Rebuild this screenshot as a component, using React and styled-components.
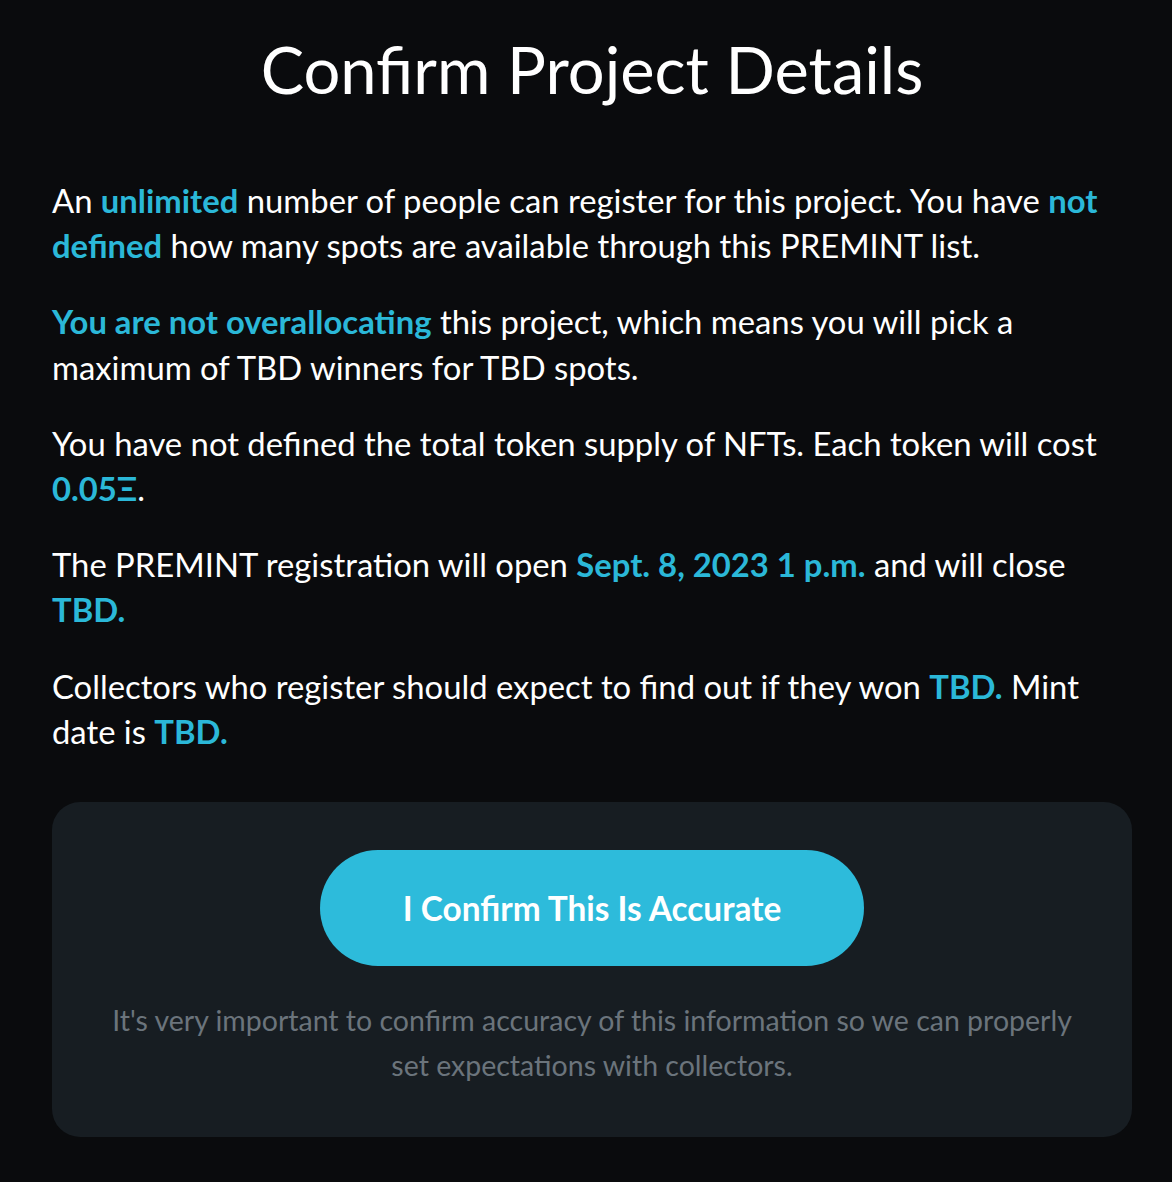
import React from "react";
import styled, { createGlobalStyle } from "styled-components";

const GlobalStyle = createGlobalStyle`
  html, body {
    margin: 0;
    padding: 0;
    background-color: #0a0b0d;
  }
  body {
    font-family: "Lato", "Noto Sans", sans-serif;
    color: #ffffff;
  }
`;

const Page = styled.div`
  min-height: 1182px;
  box-sizing: border-box;
  padding: 0 40px 45px 52px;
  background-color: #0a0b0d;
`;

const Title = styled.h1`
  margin: 0;
  padding: 31px 0 0;
  text-align: center;
  font-size: 65px;
  font-weight: 400;
  line-height: 76px;
  color: #ffffff;
`;

const Body = styled.div`
  margin-top: 71px;
`;

const Para = styled.p`
  margin: 0 0 31px;
  font-size: 32.8px;
  line-height: 45.2px;
  color: #ffffff;
`;

const Hi = styled.span`
  color: #2bb8d8;
  font-weight: 700;
`;

const Card = styled.div`
  margin-top: 48px;
  background-color: #171d22;
  border-radius: 28px;
  padding: 48px 48px 49px;
  display: flex;
  flex-direction: column;
  align-items: center;
`;

const ConfirmButton = styled.button`
  width: 544px;
  height: 116px;
  border: none;
  border-radius: 58px;
  background-color: #2dbbdb;
  color: #ffffff;
  font-family: inherit;
  font-size: 33.4px;
  font-weight: 700;
  cursor: pointer;
`;

const Note = styled.p`
  margin: 32px 0 0;
  text-align: center;
  font-size: 28.5px;
  line-height: 45px;
  color: #6b747c;
`;

const App = () => {
  return (
    <Page>
      <GlobalStyle />
      <Title>Confirm Project Details</Title>
      <Body>
        <Para>
          An <Hi>unlimited</Hi> number of people can register for this project. You have{" "}
          <Hi>not defined</Hi> how many spots are available through this PREMINT list.
        </Para>
        <Para>
          <Hi>You are not overallocating</Hi> this project, which means you will pick a maximum of
          TBD winners for TBD spots.
        </Para>
        <Para>
          You have not defined the total token supply of NFTs. Each token will cost{" "}
          <Hi>0.05Ξ</Hi>.
        </Para>
        <Para>
          The PREMINT registration will open <Hi>Sept. 8, 2023 1 p.m.</Hi> and will close{" "}
          <Hi>TBD.</Hi>
        </Para>
        <Para>
          Collectors who register should expect to find out if they won <Hi>TBD.</Hi> Mint date
          is <Hi>TBD.</Hi>
        </Para>
      </Body>
      <Card>
        <ConfirmButton type="button">I Confirm This Is Accurate</ConfirmButton>
        <Note>
          It's very important to confirm accuracy of this information so we can properly set
          expectations with collectors.
        </Note>
      </Card>
    </Page>
  );
};

export default App;
